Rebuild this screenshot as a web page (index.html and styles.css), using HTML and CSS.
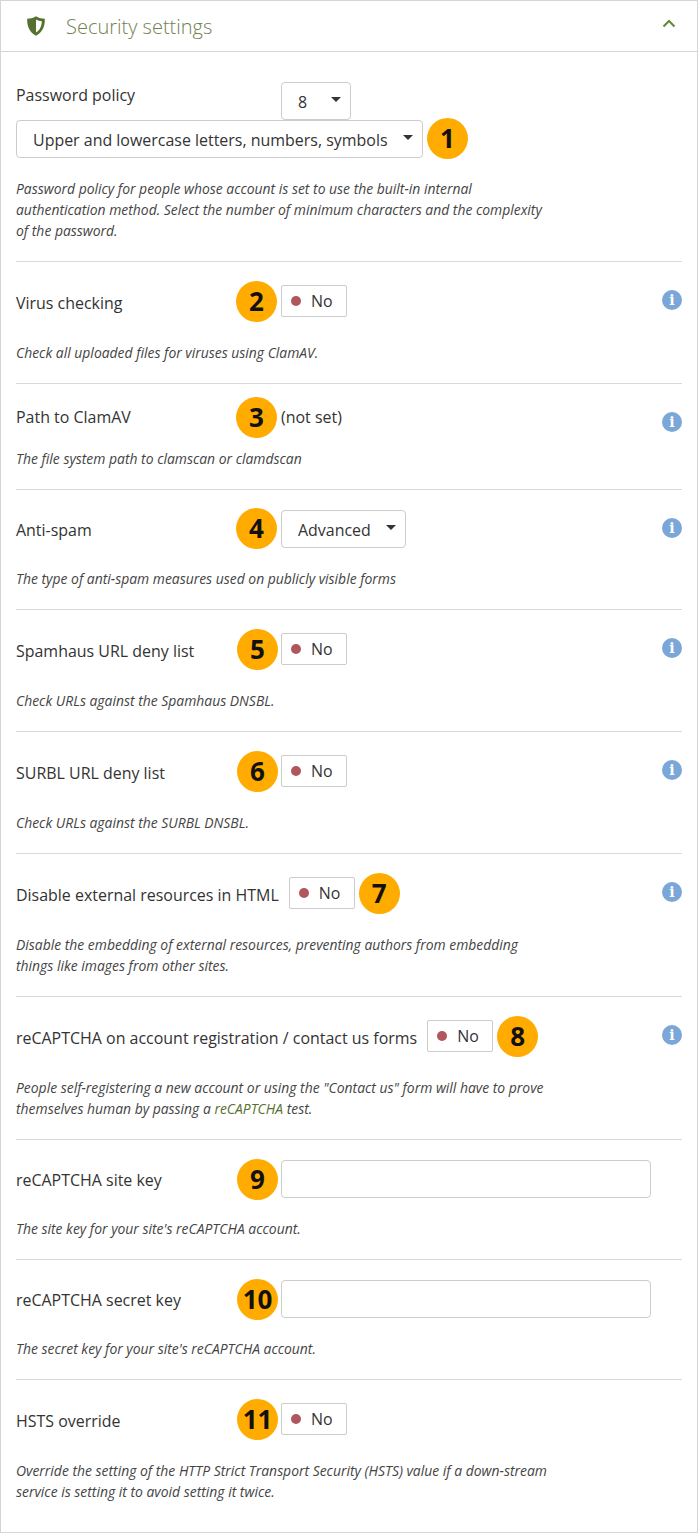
FILE: index.html
```html
<!DOCTYPE html>
<html lang="en">
<head>
<meta charset="utf-8">
<title>Security settings</title>
<link rel="stylesheet" href="styles.css">
</head>
<body>
<section class="panel">
  <header class="panel-head">
    <svg class="shield" viewBox="0 0 20 22" aria-hidden="true"><path d="M10 1.2 C7 3 4 3.6 1.2 3.8 C1 11 3 17 10 20.8 C17 17 19 11 18.800 3.800 C16 3.600 13 3 10 1.200Z" fill="#55702f"/><path d="M10 4.400 C12 5.500 14 6 15.800 6.200 C15.700 11 14 15 10 17.500Z" fill="#fff"/></svg>
    <h2 class="panel-title">Security settings</h2>
    <svg class="chevron" viewBox="0 0 14 9" aria-hidden="true"><path d="M1.500 7.500 7 2l5.500 5.500" fill="none" stroke="#5f8a38" stroke-width="2"/></svg>
  </header>
  <div class="panel-body">
    <div class="row row-policy">
      <div class="line line-policy">
        <span class="label">Password policy</span>
        <span class="select select-small">8<i class="caret"></i></span>
      </div>
      <div class="line line-policy2">
        <span class="select select-wide">Upper and lowercase letters, numbers, symbols<i class="caret"></i><b class="badge badge-right">1</b></span>
      </div>
      <p class="desc">Password policy for people whose account is set to use the built-in internal authentication method. Select the number of minimum characters and the complexity of the password.</p>
    </div>

    <div class="row">
      <div class="line">
        <span class="label">Virus checking</span>
        <span class="toggle"><b class="badge badge-near">2</b><i class="dot"></i>No</span>
        <i class="info">i</i>
      </div>
      <p class="desc">Check all uploaded files for viruses using ClamAV.</p>
    </div>

    <div class="row row-text">
      <div class="line">
        <span class="label">Path to ClamAV</span>
        <span class="plain"><b class="badge">3</b>(not set)</span>
        <i class="info">i</i>
      </div>
      <p class="desc">The file system path to clamscan or clamdscan</p>
    </div>

    <div class="row row-select">
      <div class="line">
        <span class="label">Anti-spam</span>
        <span class="select select-mid"><b class="badge badge-near">4</b>Advanced<i class="caret"></i></span>
        <i class="info">i</i>
      </div>
      <p class="desc">The type of anti-spam measures used on publicly visible forms</p>
    </div>

    <div class="row">
      <div class="line">
        <span class="label">Spamhaus URL deny list</span>
        <span class="toggle"><b class="badge">5</b><i class="dot"></i>No</span>
        <i class="info">i</i>
      </div>
      <p class="desc">Check URLs against the Spamhaus DNSBL.</p>
    </div>

    <div class="row">
      <div class="line">
        <span class="label">SURBL URL deny list</span>
        <span class="toggle"><b class="badge">6</b><i class="dot"></i>No</span>
        <i class="info">i</i>
      </div>
      <p class="desc">Check URLs against the SURBL DNSBL.</p>
    </div>

    <div class="row">
      <div class="line">
        <span class="label">Disable external resources in HTML</span>
        <span class="toggle"><i class="dot"></i>No<b class="badge badge-right">7</b></span>
        <i class="info">i</i>
      </div>
      <p class="desc desc-narrow">Disable the embedding of external resources, preventing authors from embedding things like images from other sites.</p>
    </div>

    <div class="row">
      <div class="line">
        <span class="label">reCAPTCHA on account registration / contact us forms</span>
        <span class="toggle"><i class="dot"></i>No<b class="badge badge-right">8</b></span>
        <i class="info">i</i>
      </div>
      <p class="desc">People self-registering a new account or using the "Contact us" form will have to prove themselves human by passing a <a class="link" href="#">reCAPTCHA</a> test.</p>
    </div>

    <div class="row row-input">
      <div class="line">
        <span class="label">reCAPTCHA site key</span>
        <span class="input"><b class="badge">9</b></span>
      </div>
      <p class="desc">The site key for your site's reCAPTCHA account.</p>
    </div>

    <div class="row row-input">
      <div class="line">
        <span class="label">reCAPTCHA secret key</span>
        <span class="input"><b class="badge">10</b></span>
      </div>
      <p class="desc">The secret key for your site's reCAPTCHA account.</p>
    </div>

    <div class="row row-last">
      <div class="line">
        <span class="label">HSTS override</span>
        <span class="toggle"><b class="badge">11</b><i class="dot"></i>No</span>
      </div>
      <p class="desc">Override the setting of the HTTP Strict Transport Security (HSTS) value if a down-stream service is setting it to avoid setting it twice.</p>
    </div>
  </div>
</section>
</body>
</html>
```
FILE: styles.css
```css
* { box-sizing: border-box; }
html, body { margin: 0; padding: 0; background: #fff; }
body {
  font-family: "Open Sans", sans-serif;
  font-size: 15.960px;
  color: #333;
  width: 699px;
}
.panel {
  width: 698px;
  height: 1533px;
  border: 1px solid #d5d5d5;
}
.panel-head {
  display: flex;
  align-items: center;
  height: 51px;
  border-bottom: 1px solid #d5d5d5;
  padding: 0 20px 0 25px;
}
.shield { width: 20px; height: 22px; margin-right: 20px; }
.panel-title {
  flex: 1;
  margin: 0;
  font-size: 20px;
  font-weight: 300;
  color: #6f8250;
}
.chevron { width: 14px; height: 9px; margin-right: 1px; margin-top: -6px; }
.panel-body { padding: 0 15px; }
.row { padding-top: 23px; padding-bottom: 20px; border-bottom: 1px solid #d9d9d9; }
.line { display: flex; align-items: center; min-height: 32px; position: relative; }
.label { min-width: 265px; padding-top: 4px; padding-right: 10px; line-height: 24px; }
.desc {
  margin: 25px 0 0;
  font-size: 13.920px;
  font-style: italic;
  line-height: 21px;
  color: #444;
  max-width: 535px;
}
.desc-narrow { max-width: 510px; }
.link { color: #55702f; text-decoration: none; }
.toggle, .select, .input {
  position: relative;
  display: inline-flex;
  align-items: center;
  background: #fff;
  border: 1px solid #ccc;
}
.toggle { width: 66px; height: 32px; border-radius: 2px; padding-left: 9px; padding-top: 2px; line-height: 1; }
.dot { width: 10px; height: 10px; border-radius: 50%; background: #b0565c; margin-right: 10px; margin-top: -2px; }
.select { border-radius: 4px; height: 38px; padding-left: 16px; padding-top: 2px; }
.select-small { width: 70px; }
.select-wide { width: 407px; }
.select-mid { width: 125px; }
.caret {
  position: absolute;
  right: 9px;
  top: 14px;
  width: 0;
  height: 0;
  border-left: 5px solid transparent;
  border-right: 5px solid transparent;
  border-top: 5px solid #333;
}
.plain { position: relative; line-height: 24px; }
.input { width: 370px; height: 38px; border-radius: 4px; }
.info {
  position: absolute;
  right: 0;
  top: 5px;
  width: 20px;
  height: 20px;
  border-radius: 50%;
  background: #7ba6d8;
  color: #fff;
  font-family: "DejaVu Serif", serif;
  font-style: normal;
  font-weight: 700;
  font-size: 14px;
  line-height: 20px;
  text-align: center;
}
.badge {
  position: absolute;
  left: -45px;
  top: 50%;
  margin-top: -20.500px;
  width: 41px;
  height: 41px;
  border-radius: 50%;
  background: #ffab00;
  color: #111;
  font-family: "Open Sans", sans-serif;
  font-weight: 700;
  font-size: 26px;
  line-height: 41px;
  text-align: center;
}
.badge-right { left: auto; right: -46px; }
.badge-near { left: -46px; }
.select .badge { margin-top: -21.500px; }
.row-policy { padding-top: 30px; padding-bottom: 20px; }
.line-policy { align-items: flex-start; min-height: 38px; }
.line-policy .label { padding-top: 1px; }
.line-policy2 { min-height: 38px; }
.row-policy .desc { margin-top: 20px; }
.row-text { padding-top: 21px; }
.row-text .line { min-height: 24px; }
.row-text .label { padding-top: 0; }
.row-text .desc { margin-top: 19px; }
.row-text .info { top: 7px; }
.row-select { padding-top: 20px; }
.row-select .line { min-height: 38px; }
.row-select .label { padding-top: 2px; }
.row-select .desc { margin-top: 20px; }
.row-select .info { top: 8px; }
.row-input { padding-top: 20px; }
.row-input .line { min-height: 38px; }
.row-input .label { padding-top: 2px; }
.row-input .desc { margin-top: 20px; }
.row-last { border-bottom: 0; }
```
